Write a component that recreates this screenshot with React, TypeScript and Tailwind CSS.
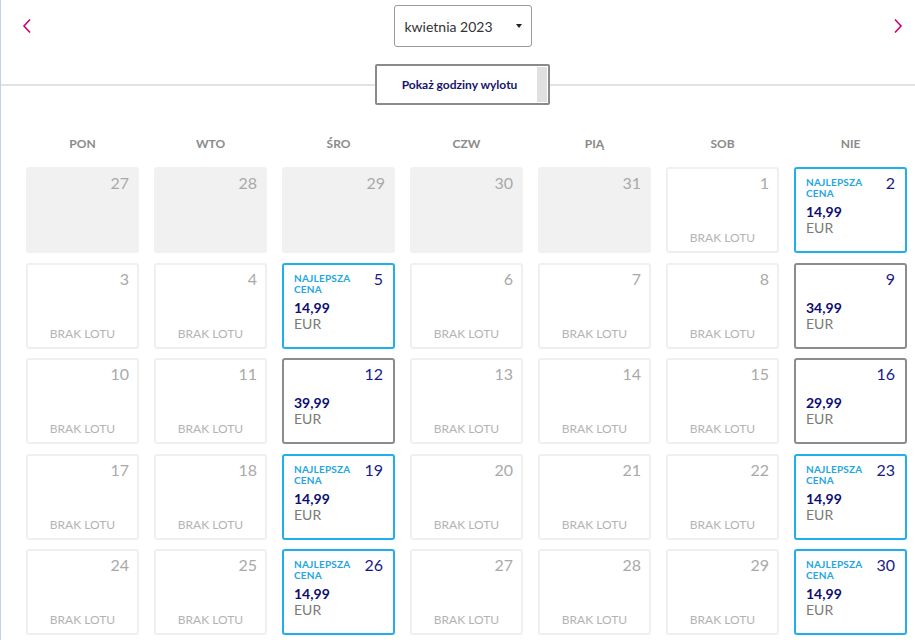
import React from "react";

type Cell =
  | { d: number; t: "past" }
  | { d: number; t: "none" }
  | { d: number; t: "best"; p: string }
  | { d: number; t: "price"; p: string };

const rows: Cell[][] = [
  [
    { d: 27, t: "past" },
    { d: 28, t: "past" },
    { d: 29, t: "past" },
    { d: 30, t: "past" },
    { d: 31, t: "past" },
    { d: 1, t: "none" },
    { d: 2, t: "best", p: "14,99" },
  ],
  [
    { d: 3, t: "none" },
    { d: 4, t: "none" },
    { d: 5, t: "best", p: "14,99" },
    { d: 6, t: "none" },
    { d: 7, t: "none" },
    { d: 8, t: "none" },
    { d: 9, t: "price", p: "34,99" },
  ],
  [
    { d: 10, t: "none" },
    { d: 11, t: "none" },
    { d: 12, t: "price", p: "39,99" },
    { d: 13, t: "none" },
    { d: 14, t: "none" },
    { d: 15, t: "none" },
    { d: 16, t: "price", p: "29,99" },
  ],
  [
    { d: 17, t: "none" },
    { d: 18, t: "none" },
    { d: 19, t: "best", p: "14,99" },
    { d: 20, t: "none" },
    { d: 21, t: "none" },
    { d: 22, t: "none" },
    { d: 23, t: "best", p: "14,99" },
  ],
  [
    { d: 24, t: "none" },
    { d: 25, t: "none" },
    { d: 26, t: "best", p: "14,99" },
    { d: 27, t: "none" },
    { d: 28, t: "none" },
    { d: 29, t: "none" },
    { d: 30, t: "best", p: "14,99" },
  ],
];

const days = ["PON", "WTO", "ŚRO", "CZW", "PIĄ", "SOB", "NIE"];

function DayCell({ c }: { c: Cell }) {
  if (c.t === "past") {
    return (
      <div className="h-[86px] rounded-[3px] bg-[#f1f1f1] flex flex-col pr-[10px] pt-[6px]">
        <div className="flex justify-end text-[16px] leading-[20px] text-[#a9a9a9]">{c.d}</div>
      </div>
    );
  }
  if (c.t === "none") {
    return (
      <div className="h-[86px] rounded-[3px] border-2 border-[#efefef] bg-white flex flex-col pl-[8px] pr-[8px] pt-[4px] pb-[5px]">
        <div className="flex justify-end text-[16px] leading-[20px] text-[#a9a9a9]">{c.d}</div>
        <div className="mt-auto text-center text-[12px] leading-[16px] text-[#b3b3b3]">BRAK LOTU</div>
      </div>
    );
  }
  const best = c.t === "best";
  return (
    <div
      className={
        "h-[86px] rounded-[3px] border-2 bg-white flex flex-col pl-[10px] pr-[10px] pt-[4px] pb-[15px] " +
        (best ? "border-[#1fb0ea]" : "border-[#8c8c8c]")
      }
    >
      <div className="flex justify-between items-start">
        <div className="pt-[4px] text-[10px] leading-[11px] font-bold text-[#23a6e2] tracking-[0.2px]">
          {best ? (
            <>
              NAJLEPSZA
              <br />
              CENA
            </>
          ) : null}
        </div>
        <div className="text-[16px] leading-[20px] text-[#1a1a86]">{c.d}</div>
      </div>
      <div className="mt-auto flex flex-col">
        <div className="text-[14px] leading-[16px] font-bold text-[#0d0d73]">{c.p}</div>
        <div className="text-[14px] leading-[16px] text-[#7a7a7a]">EUR</div>
      </div>
    </div>
  );
}

export default function App() {
  return (
    <div
      className="w-[915px] h-[640px] bg-white overflow-hidden border-l border-[#bcd4e6]"
      style={{ fontFamily: "Lato, 'Noto Sans', sans-serif" }}
    >
      <div className="h-[86px] border-b-2 border-[#e3e3e3] flex items-start justify-between pl-[21px] pr-[12px]">
        <svg width="10" height="16" viewBox="0 0 10 16" className="mt-[18px]">
          <polyline points="8,1.5 2,8 8,14.5" fill="none" stroke="#c7007d" strokeWidth="1.6" />
        </svg>
        <div className="mt-[5px] w-[138px] h-[42px] rounded-[3px] border border-[#9a9a9a] flex items-center justify-between pl-[10px] pr-[9px]">
          <span className="text-[14px] text-[#333333]">kwietnia 2023</span>
          <span className="w-0 h-0 border-l-[3.5px] border-r-[3.5px] border-t-[4px] border-l-transparent border-r-transparent border-t-[#222]" />
        </div>
        <svg width="10" height="16" viewBox="0 0 10 16" className="mt-[18px]">
          <polyline points="2,1.5 8,8 2,14.5" fill="none" stroke="#c7007d" strokeWidth="1.6" />
        </svg>
      </div>
      <div className="flex justify-center -mt-[22px] pl-[8px]">
        <div className="w-[175px] h-[41px] rounded-[2px] border-2 border-[#8a8a8a] bg-white flex items-stretch">
          <div className="flex-1 flex items-center justify-center text-[12px] font-bold text-[#15156e] pl-[6px]">
            Pokaż godziny wylotu
          </div>
          <div className="w-[10px] bg-[#e0e0e0] my-[1px] mr-[1px]" />
        </div>
      </div>
      <div className="pl-[25px] pr-[8px]">
        <div className="grid grid-cols-7 gap-x-[15px] mt-[32px]">
          {days.map((d) => (
            <div key={d} className="text-center text-[12px] leading-[14px] font-bold text-[#8a8a8a]">
              {d}
            </div>
          ))}
        </div>
        <div className="grid grid-cols-7 gap-x-[15px] gap-y-[9.5px] mt-[16px]">
          {rows.flat().map((c, i) => (
            <DayCell key={i} c={c} />
          ))}
        </div>
      </div>
    </div>
  );
}
